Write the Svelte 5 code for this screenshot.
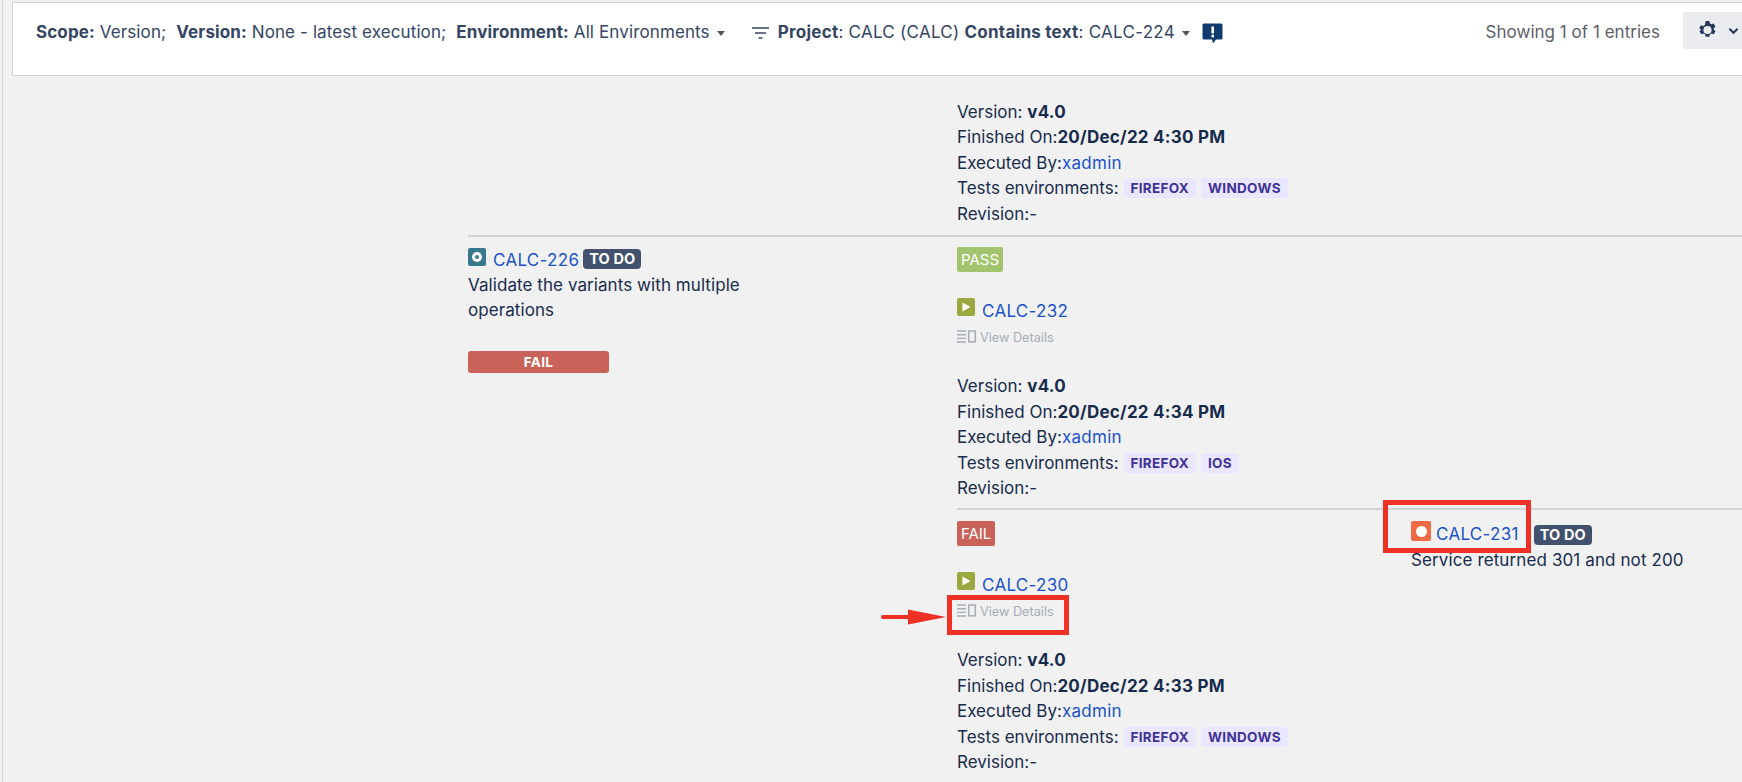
<script>
  const rows = [
    { status: 'PASS', cls: 'pass', key: 'CALC-232', time: '20/Dec/22 4:34 PM', envs: ['FIREFOX', 'IOS'] },
    { status: 'FAIL', cls: 'fail', key: 'CALC-230', time: '20/Dec/22 4:33 PM', envs: ['FIREFOX', 'WINDOWS'] }
  ];
</script>

{#snippet meta(time, envs)}
  <div class="meta">
    <div class="line">Version: <b>v4.0</b></div>
    <div class="line">Finished On:<b>{time}</b></div>
    <div class="line">Executed By:<a href="#x">xadmin</a></div>
    <div class="line">Tests environments:{#each envs as e}<span class="env">{e}</span>{/each}</div>
    <div class="line">Revision:-</div>
  </div>
{/snippet}

<div class="page">
  <header class="bar">
    <div class="filters">
      <span class="f"><b>Scope:</b> Version;</span>
      <span class="f"><b>Version:</b> None - latest execution;</span>
      <span class="f"><b>Environment:</b> All Environments</span>
      <i class="caret envcaret"></i>
      <svg class="funnel" width="17" height="14" viewBox="0 0 17 14"><path d="M0 2h17M3 7h11M6.500 12h4" stroke="#344563" stroke-width="1.600" fill="none"/></svg>
      <span class="f2"><b>Project</b>: CALC (CALC) <b>Contains text</b>: CALC-224</span>
      <i class="caret"></i>
      <svg class="flag" width="21" height="23" viewBox="0 0 21 22"><path d="M2 1h17a1.500 1.500 0 0 1 1.500 1.500v13a1.500 1.500 0 0 1-1.500 1.500h-5l-3 4-1-4H2a1.500 1.500 0 0 1-1.500-1.500v-13A1.500 1.500 0 0 1 2 1z" fill="#0f3a6e"/><rect x="9.400" y="4" width="2.600" height="7" fill="#fff"/><rect x="9.400" y="12.300" width="2.600" height="2.600" fill="#fff"/></svg>
    </div>
    <div class="right">
      <span class="count">Showing 1 of 1 entries</span>
      <button class="gear" aria-label="Settings">
        <svg width="21" height="21" viewBox="0 0 20 20"><path d="M8.300 1.500h3.400l.5 2.200 1.500.9 2.200-.7 1.700 3-1.700 1.500v1.200l1.700 1.500-1.700 3-2.200-.7-1.500.9-.5 2.200H8.300l-.5-2.200-1.500-.9-2.200.7-1.700-3 1.700-1.500V9.900L2.100 8.400l1.700-3 2.200.7 1.500-.9z" fill="#253858" transform="translate(0 -.5)"/><circle cx="10" cy="9.500" r="3.900" fill="#ebecf0"/></svg>
        <svg width="11" height="8" viewBox="0 0 12 8"><path d="M1.500 1.500 6 6l4.500-4.500" stroke="#253858" stroke-width="2.200" fill="none"/></svg>
      </button>
    </div>
  </header>

  <main class="body">
    <section class="toprun">{@render meta('20/Dec/22 4:30 PM', ['FIREFOX', 'WINDOWS'])}</section>
    <section class="grid">
      <div class="issue">
        <div class="head">
          <span class="ico teal"><span class="ring"></span></span>
          <a href="#x">CALC-226</a>
          <span class="todo">TO DO</span>
        </div>
        <p class="desc">Validate the variants with multiple operations</p>
        <div class="failbar">FAIL</div>
      </div>
      <div class="runs">
        {#each rows as r, i}
          <div class="run" class:last={i === 1}>
            <span class="badge {r.cls}">{r.status}</span>
            <div class="key">
              <span class="ico olive"><svg width="10" height="10" viewBox="0 0 10 10"><path d="M1.500 0.500 9.500 5l-8 4.500z" fill="#fff"/></svg></span>
              <a href="#x">{r.key}</a>
            </div>
            <div class="details">
              <svg width="20" height="13" viewBox="0 0 20 13"><path d="M0 1h9M0 4.700h9M0 8.400h9M0 12h9" stroke="#a5adba" stroke-width="1.400"/><rect x="11.700" y="1" width="6.600" height="10.800" fill="none" stroke="#a5adba" stroke-width="1.500"/></svg>
              <span>View Details</span>
              {#if i === 1}
                <span class="redbox detailbox"></span>
                <svg class="arrow" width="65" height="16" viewBox="0 0 65 16"><path d="M2 8h26" stroke="#ee3124" stroke-width="4" stroke-linecap="round"/><path d="M27 .5 65 8 27 15.500z" fill="#ee3124"/></svg>
              {/if}
            </div>
            {@render meta(r.time, r.envs)}
            {#if i === 1}
              <div class="defect">
                <div class="defhead">
                  <span class="ico orange"><span class="dot"></span></span>
                  <a href="#x">CALC-231</a>
                  <span class="todo">TO DO</span>
                  <span class="redbox keybox"></span>
                </div>
                <div class="deftext">Service returned 301 and not 200</div>
              </div>
            {/if}
          </div>
        {/each}
      </div>
    </section>
  </main>
</div>

<style>
  :global(body) { margin: 0; background: #f1f1f1; }
  .page {
    height: 782px; overflow: hidden; background: #f1f1f1; margin-left: 2px;
    font-family: Inter, "Liberation Sans", sans-serif; font-size: 17px; color: #172b4d;
    padding: 2px 0 0 0; box-sizing: border-box; border-left: 1px solid #d5d5d5;
  }
  a { color: #1a53c9; text-decoration: none; letter-spacing: .3px; }
  b { font-weight: 700; letter-spacing: .25px; }
  .bar {
    margin-left: 9px; height: 74px; box-sizing: border-box; background: #fff;
    border: 1px solid #d2d2d2; border-right: 0; display: flex; justify-content: space-between;
    padding: 16px 0 0 23px; color: #344563;
  }
  .filters { display: flex; align-items: flex-start; height: 26px; line-height: 26px; white-space: nowrap; }
  .f { margin-right: 10px; letter-spacing: .12px; }
  .f b { letter-spacing: .12px; }
  .f2 { letter-spacing: .27px; }
  .caret { width: 0; height: 0; border: 4.500px solid transparent; border-top: 5px solid #55565a; border-bottom: 0; margin: 12px 0 0 7px; }
  .caret.envcaret { margin: 12px 27px 0 -3px; }
  .funnel { margin: 7px 9px 0 0; }
  .flag { margin: 3px 0 0 12px; }
  .right { display: flex; align-items: flex-start; }
  .count { color: #5e6066; line-height: 26px; margin-right: 23px; white-space: nowrap; letter-spacing: .02px; }
  .gear {
    width: 59px; height: 37px; border: 0; border-radius: 3px 0 0 3px; background: #ebecf0; margin-top: -7px;
    display: flex; align-items: center; gap: 10px; padding: 0 0 0 14px; box-sizing: border-box; flex: none;
  }
  .body { padding: 23.500px 0 0 465px; line-height: 25.500px; }
  .toprun { padding-left: 489px; padding-bottom: 8px; }
  .grid { display: flex; border-top: 2px solid #d2d2d2; }
  .issue { width: 489px; flex: none; padding-top: 9px; box-sizing: border-box; }
  .head { display: flex; align-items: flex-start; height: 26.500px; }
  .ico { width: 18px; height: 18px; border-radius: 2px; display: inline-flex; align-items: center; justify-content: center; flex: none; margin-right: 7px; }
  .teal { background: #38788c; margin-top: 2px; }
  .ring { width: 10px; height: 10px; border-radius: 50%; border: 3px solid #fff; box-sizing: border-box; background: #38788c; }
  .olive { background: #9aa83f; }
  .orange { background: #f06a45; width: 20px; height: 20px; margin-right: 5px; }
  .dot { width: 11px; height: 11px; background: #fff; border-radius: 50%; }
  .head a { margin-top: 1.500px; }
  .todo {
    background: #42526e; color: #fff; font-size: 14.500px; font-weight: 700; line-height: 20px; padding: 0 6px;
    border-radius: 4px; margin-left: 4px; letter-spacing: .1px;
  }
  .head .todo { margin-top: 3px; }
  .desc { width: 290px; margin: 0 0 27.500px; letter-spacing: .07px; }
  .failbar {
    width: 141px; height: 22px; line-height: 22px; background: #c9635a; color: #fff; text-align: center;
    border-radius: 3px; font-size: 13.500px; font-weight: 700; letter-spacing: .3px;
  }
  .runs { flex: 1; }
  .run { position: relative; padding-top: 10px; height: 273px; box-sizing: border-box; border-bottom: 2px solid #d2d2d2; }
  .run.last { border-bottom: 0; height: auto; padding-top: 11px; }
  .badge { display: block; width: fit-content; color: #fff; font-size: 15px; line-height: 25px; padding: 0 4px; border-radius: 2px; }
  .pass { background: #a3c46f; }
  .fail { background: #c9635a; }
  .key { display: flex; margin-top: 26px; height: 25px; align-items: flex-start; }
  .key a { margin-top: 1px; }
  .details { position: relative; display: flex; align-items: center; gap: 3px; color: #a5adba; font-size: 12.700px; height: 20px; line-height: 20px; margin-top: 5px; }
  .details svg { margin-top: -3px; }
  .redbox { position: absolute; border: 5px solid #ee3124; box-sizing: border-box; }
  .detailbox { left: -10px; top: -7px; width: 122px; height: 40px; }
  .details .arrow { position: absolute; left: -76px; top: 7px; margin-top: 0; }
  .meta { margin-top: 26px; }
  .toprun .meta { margin-top: 0; }
  .line { white-space: nowrap; height: 25.500px; }
  .env {
    display: inline-block; background: #eae6ff; color: #403294; font-size: 13.500px; font-weight: 700; line-height: 20px;
    padding: 0 7px; border-radius: 4px; margin-left: 5px; letter-spacing: .3px; vertical-align: 1px;
  }
  .defect { position: absolute; left: 454px; top: 11px; white-space: nowrap; }
  .defhead { position: relative; display: flex; align-items: flex-start; height: 27px; }
  .defhead a { margin-top: 1px; margin-right: 11px; }
  .defhead .todo { margin-top: 4px; }
  .deftext { letter-spacing: .11px; }
  .keybox { left: -28px; top: -21px; width: 148px; height: 53px; }
</style>
